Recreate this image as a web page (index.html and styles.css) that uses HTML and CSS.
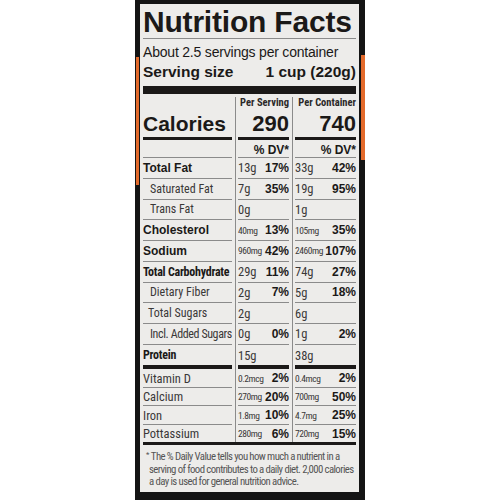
FILE: index.html
```html
<!DOCTYPE html>
<html lang="en">
<head>
    <meta charset="UTF-8">
    <meta name="viewport" content="width=device-width, initial-scale=1.0">
    <title>Nutrition Facts</title>
    <link rel="stylesheet" href="styles.css">
</head>
<body>

<!-- Krabice s etiketou -->
<div class="package">
    <div class="label">
        <h1 class="title">Nutrition Facts</h1>
        <p class="servings">About 2.5 servings per container</p>
        <div class="serving-size">
            <span>Serving size</span>
            <span>1 cup (220g)</span>
        </div>
        <div class="bar-thick"></div>

        <!-- Tabulka hodnot -->
        <div class="facts">
            <div class="row head">
                <div></div>
                <div class="col-title">Per Serving</div>
                <div class="col-title">Per Container</div>
            </div>
            <div class="row calories">
                <div class="cell">Calories</div>
                <div class="cell num">290</div>
                <div class="cell num">740</div>
            </div>
            <div class="row dv">
                <div class="cell"></div>
                <div class="cell">% DV*</div>
                <div class="cell">% DV*</div>
            </div>

            <div class="row">
                <div class="cell name bold">Total Fat</div>
                <div class="cell"><span class="amt">13g</span><b>17%</b></div>
                <div class="cell"><span class="amt">33g</span><b>42%</b></div>
            </div>
            <div class="row">
                <div class="cell name sub">Saturated Fat</div>
                <div class="cell"><span class="amt">7g</span><b>35%</b></div>
                <div class="cell"><span class="amt">19g</span><b>95%</b></div>
            </div>
            <div class="row">
                <div class="cell name sub">Trans Fat</div>
                <div class="cell"><span class="amt">0g</span></div>
                <div class="cell"><span class="amt">1g</span></div>
            </div>
            <div class="row">
                <div class="cell name bold">Cholesterol</div>
                <div class="cell"><span class="amt tiny">40mg</span><b>13%</b></div>
                <div class="cell"><span class="amt tiny">105mg</span><b>35%</b></div>
            </div>
            <div class="row">
                <div class="cell name bold">Sodium</div>
                <div class="cell"><span class="amt tiny">960mg</span><b>42%</b></div>
                <div class="cell"><span class="amt tiny">2460mg</span><b>107%</b></div>
            </div>
            <div class="row">
                <div class="cell name cbold">Total Carbohydrate</div>
                <div class="cell"><span class="amt">29g</span><b>11%</b></div>
                <div class="cell"><span class="amt">74g</span><b>27%</b></div>
            </div>
            <div class="row">
                <div class="cell name sub">Dietary Fiber</div>
                <div class="cell"><span class="amt">2g</span><b>7%</b></div>
                <div class="cell"><span class="amt">5g</span><b>18%</b></div>
            </div>
            <div class="row">
                <div class="cell name sub2">Total Sugars</div>
                <div class="cell"><span class="amt">2g</span></div>
                <div class="cell"><span class="amt">6g</span></div>
            </div>
            <div class="row">
                <div class="cell name sub tight">Incl. Added Sugars</div>
                <div class="cell"><span class="amt">0g</span><b>0%</b></div>
                <div class="cell"><span class="amt">1g</span><b>2%</b></div>
            </div>
            <div class="row protein">
                <div class="cell name cbold">Protein</div>
                <div class="cell"><span class="amt">15g</span></div>
                <div class="cell"><span class="amt">38g</span></div>
            </div>

            <div class="row vit">
                <div class="cell name">Vitamin D</div>
                <div class="cell"><span class="amt tiny">0.2mcg</span><b>2%</b></div>
                <div class="cell"><span class="amt tiny">0.4mcg</span><b>2%</b></div>
            </div>
            <div class="row vit">
                <div class="cell name">Calcium</div>
                <div class="cell"><span class="amt tiny">270mg</span><b>20%</b></div>
                <div class="cell"><span class="amt tiny">700mg</span><b>50%</b></div>
            </div>
            <div class="row vit">
                <div class="cell name">Iron</div>
                <div class="cell"><span class="amt tiny">1.8mg</span><b>10%</b></div>
                <div class="cell"><span class="amt tiny">4.7mg</span><b>25%</b></div>
            </div>
            <div class="row vit last">
                <div class="cell name">Pottassium</div>
                <div class="cell"><span class="amt tiny">280mg</span><b>6%</b></div>
                <div class="cell"><span class="amt tiny">720mg</span><b>15%</b></div>
            </div>
        </div>
        <div class="bar-bottom"></div>

        <p class="note"><sup>*</sup>The % Daily Value tells you how much a nutrient in a<br>serving of food contributes to a daily diet. 2,000 calories<br>a day is used for general nutrition advice.</p>
    </div>
</div>

</body>
</html>
```
FILE: styles.css
```css
body {
    margin: 0;
    padding: 0;
    background-color: #fff;
    display: flex;
    justify-content: center;
    font-family: "Liberation Sans", Arial, sans-serif;
    color: #1b1918;
}

/* Tmavý okraj krabice s oranžovými pruhy */
.package {
    width: 230px;
    height: 500px;
    box-sizing: border-box;
    padding: 4px 6px 8px 5px;
    overflow: hidden;
    background:
        linear-gradient(#e36a2b, #e36a2b) left 1px top 57px / 3px 128px no-repeat,
        linear-gradient(#e36a2b, #e36a2b) right 0 top 55px / 4px 105px no-repeat,
        #141414;
}

.label {
    background-color: #edecea;
    padding: 3px 3px 4px 3px;
}

.title {
    margin: 0;
    font-size: 30px;
    line-height: 30px;
    font-weight: bold;
    letter-spacing: -0.2px;
    padding-bottom: 1px;
    border-bottom: 1px solid #8b8b8b;
}

.servings {
    margin: 5px 0 0 0;
    font-size: 14px;
    line-height: 16px;
    letter-spacing: -0.2px;
}

.serving-size {
    margin-top: 3px;
    display: flex;
    justify-content: space-between;
    font-size: 15.5px;
    line-height: 18px;
    font-weight: bold;
}

.bar-thick {
    margin-top: 5px;
    height: 8px;
    background-color: #1b1918;
}

/* Tabulka se dvěma sloupci hodnot */
.facts {
    margin-top: 3px;
    background:
        linear-gradient(#8b8b8b, #8b8b8b) 92px 0 / 1px 100% no-repeat,
        linear-gradient(#8b8b8b, #8b8b8b) 149px 0 / 1px 100% no-repeat;
}
.row {
    display: grid;
    grid-template-columns: 89px 51px 61px;
    column-gap: 6px;
}
.cell {
    height: 19.75px;
    border-bottom: 1px solid #8b8b8b;
    display: flex;
    align-items: center;
    justify-content: space-between;
    white-space: nowrap;
}
.cell b {
    font-size: 12px;
    font-weight: bold;
}

.head .col-title {
    font-family: Roboto, sans-serif;
    font-stretch: 75%;
    font-weight: bold;
    font-size: 10.5px;
    line-height: 12px;
    text-align: right;
    color: #2a2828;
}

.calories .cell {
    height: 24px;
    padding-top: 3px;
    padding-bottom: 1px;
    border-bottom: 3px solid #1b1918;
    font-size: 21px;
    font-weight: bold;
    align-items: flex-start;
    line-height: 24px;
}
.calories .num {
    font-size: 22px;
    justify-content: flex-end;
}

.dv .cell {
    height: 14px;
    padding-top: 3px;
    line-height: 14px;
    font-size: 12px;
    font-weight: bold;
    justify-content: flex-end;
}

.name {
    font-size: 12px;
}
.name.bold {
    font-weight: bold;
}
.name.cbold {
    font-family: Roboto, sans-serif;
    font-stretch: 75%;
    font-weight: bold;
    font-size: 12px;
    letter-spacing: -0.25px;
}
.name.sub,
.name.sub2 {
    font-family: Roboto, sans-serif;
    font-stretch: 85%;
    color: #3a3838;
    padding-left: 7px;
}
.name.sub2 {
    padding-left: 5px;
}
.name.tight {
    letter-spacing: -0.4px;
}

.amt {
    font-family: Roboto, sans-serif;
    font-stretch: 80%;
    font-size: 12.5px;
    color: #3a3838;
}
.amt.tiny {
    font-size: 9.5px;
    font-stretch: 75%;
    letter-spacing: -0.45px;
}

.protein .cell {
    height: 20.5px;
    border-bottom: 4px solid #1b1918;
}

.vit .cell {
    height: 17.5px;
}
.vit .name {
    font-family: Roboto, sans-serif;
    font-stretch: 80%;
    font-size: 12.5px;
    color: #3a3838;
}
.last .cell {
    border-bottom: none;
}

.bar-bottom {
    height: 3px;
    background-color: #1b1918;
}

/* Poznámka pod čarou */
.note {
    margin: 0;
    padding: 6px 2px 0 6px;
    font-family: Roboto, sans-serif;
    font-stretch: 75%;
    font-size: 10.8px;
    line-height: 12.3px;
    letter-spacing: -0.6px;
    white-space: nowrap;
    color: #555;
}
.note sup {
    font-size: 8px;
    margin-left: -3px;
    margin-right: 2px;
    vertical-align: 3px;
    line-height: 0;
}
```
